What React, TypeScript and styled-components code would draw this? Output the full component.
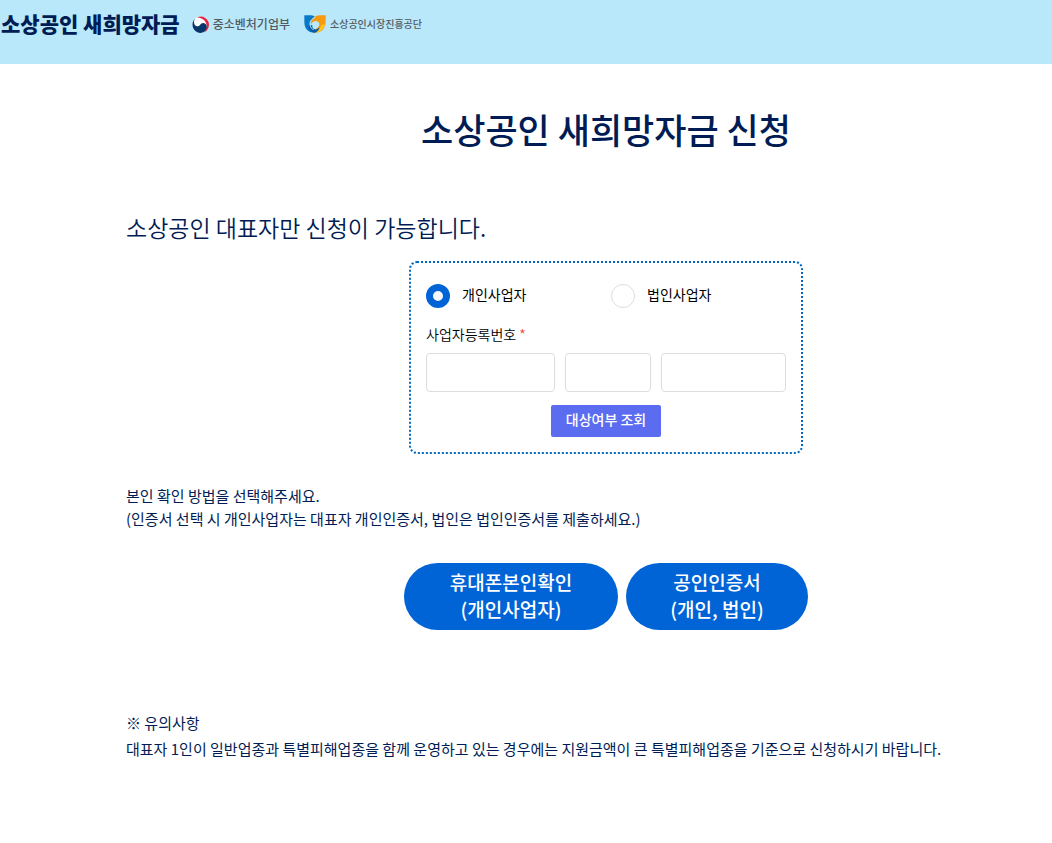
import React from 'react';
import styled, { createGlobalStyle } from 'styled-components';

const GlobalStyle = createGlobalStyle`
  *, *::before, *::after { box-sizing: border-box; }
  body {
    margin: 0;
    background: #fff;
    color: #001c54;
    font-family: "Noto Sans CJK KR", "Noto Sans", sans-serif;
    font-size: 15px;
    word-break: keep-all;
  }
  h1, h2, p, fieldset { margin: 0; padding: 0; border: 0; font-weight: 400; }
  button, input { font-family: inherit; }
`;

const Header = styled.header`
  display: flex;
  align-items: flex-start;
  height: 64px;
  padding: 11px 0 0 1px;
  background: #b8e8fa;
  line-height: 24px;
  white-space: nowrap;
`;

const SiteName = styled.a`
  color: #001c54;
  font-size: 21px;
  font-weight: 900;
  text-decoration: none;
`;

const Agencies = styled.div`
  display: flex;
  gap: 14px;
  margin-left: 12px;
`;

const Agency = styled.a<{ $size: number }>`
  display: flex;
  align-items: center;
  gap: 4px;
  height: 26px;
  color: #555a60;
  font-size: ${(p) => p.$size}px;
  font-weight: 500;
  text-decoration: none;

  svg { flex: none; }
`;

const Main = styled.main`
  padding: 40px 0 60px 126px;
`;

const Centered = styled.div`
  display: flex;
  justify-content: center;
  padding-left: 34px;
`;

const Title = styled.h1`
  font-size: 35px;
  font-weight: 500;
  line-height: 50px;
`;

const Lead = styled.h2`
  margin: 57px 0 17px;
  font-size: 23px;
  font-weight: 350;
  line-height: 33px;
`;

const FormBox = styled.form`
  display: flex;
  flex-direction: column;
  width: 394px;
  padding: 20px 15px 15px;
  border: 2px dotted #0068c0;
  border-radius: 8px;
  color: #000;
  font-size: 14px;
`;

const RadioRow = styled.fieldset`
  display: grid;
  grid-template-columns: 185px 1fr;
`;

const RadioLabel = styled.label`
  display: flex;
  align-items: center;
  gap: 12px;
  height: 26px;
  line-height: 22px;

  span { padding-bottom: 4px; }
`;

const Radio = styled.input`
  appearance: none;
  width: 24px;
  height: 24px;
  margin: 0;
  border: 1px solid #ddd;
  border-radius: 50%;
  background: #fff;

  &:checked {
    border: 7px solid #0064d6;
    background: #f4f8fd;
  }
`;

const NumberLabel = styled.label`
  margin: 15px 0 9px;
  font-weight: 350;
  line-height: 20px;
`;

const Required = styled.span`
  margin-left: 3px;
  color: #f0453a;
`;

const NumberRow = styled.div`
  display: grid;
  grid-template-columns: 129fr 86fr 125fr;
  gap: 10px;
`;

const NumberInput = styled.input`
  width: 100%;
  height: 39px;
  padding: 0 10px;
  border: 1px solid #ddd;
  border-radius: 4px;
  background: #fff;
  font-size: 14px;
`;

const CheckButton = styled.button`
  align-self: center;
  width: 110px;
  height: 32px;
  margin-top: 13px;
  padding: 0 0 4px;
  border: 0;
  border-radius: 2px;
  background: #5c6cf0;
  color: #fff;
  font-size: 14px;
  font-weight: 500;
  line-height: 28px;
`;

const Guide = styled.p`
  margin: 30px 0 33px;
  line-height: 23px;
`;

const Actions = styled(Centered)`
  gap: 8px;
`;

const ActionButton = styled.button<{ $width: number }>`
  width: ${(p) => p.$width}px;
  padding: 5px 0 8px;
  border: 0;
  border-radius: 34px;
  background: #0064d6;
  color: #fff;
  font-size: 19px;
  font-weight: 500;
  line-height: 27px;
`;

const Notice = styled.p`
  margin-top: 80px;
  line-height: 26px;
`;

const GovernmentMark = () => (
  <svg width="17" height="17" viewBox="0 0 34 34" aria-hidden="true">
    <circle cx="17" cy="17" r="16" fill="#fff" />
    <path d="M10 3C18-2 29 2 33 12c3 9-2 18-9 21 5-6 7-15 3-21C24 6 17 3 10 3Z" fill="#e6213c" />
    <path d="M8 4C0 9-1 20 4 27c5 7 15 9 21 4 5-4 6-12 2-15-4-4-9-1-11 2-3 4-9 3-11-1C3 12 4 7 8 4Z" fill="#06366b" />
  </svg>
);

const FoundationMark = () => (
  <svg width="22" height="18" viewBox="0 0 66 54" aria-hidden="true">
    <path d="M1 1h20c6 0 10 2 12 6-9 4-15 11-15 21 0 12 7 19 17 19v6C12 54 1 41 1 20Z" fill="#0879c6" />
    <path d="M65 1H48c-15 0-27 10-27 24v4c3-8 9-12 16-11 6 1 9 5 9 10 0 6-4 11-10 13l-2 12c20 0 31-15 31-36Z" fill="#f79a10" />
    <path d="M63 25c-4 18-15 28-32 28l3-8c9 0 16-6 19-15 4 0 8-2 10-5Z" fill="#ffc91a" />
    <path d="M14 31c-1 13 7 22 19 22 8-3 13-9 14-17-4 5-9 8-14 7-6-1-9-6-8-12Z" fill="#0a5aa6" />
    <path d="M27 29c0-5 4-8 8-7 4 0 6 3 5 7s-4 7-8 7-5-3-5-7Z" fill="#b8e8fa" />
    <path d="M34 7c-11 4-17 12-16 22 1 8 5 13 11 15" fill="none" stroke="#b8e8fa" strokeWidth="3" />
  </svg>
);

export default function App() {
  return (
    <>
      <GlobalStyle />
      <Header>
        <SiteName href="#">소상공인 새희망자금</SiteName>
        <Agencies>
          <Agency href="#" $size={12}>
            <GovernmentMark />
            중소벤처기업부
          </Agency>
          <Agency href="#" $size={10}>
            <FoundationMark />
            소상공인시장진흥공단
          </Agency>
        </Agencies>
      </Header>
      <Main>
        <Centered>
          <Title>소상공인 새희망자금 신청</Title>
        </Centered>
        <Lead>소상공인 대표자만 신청이 가능합니다.</Lead>
        <Centered>
          <FormBox onSubmit={(e) => e.preventDefault()}>
            <RadioRow aria-label="사업자 구분">
              <RadioLabel>
                <Radio type="radio" name="kind" value="personal" defaultChecked />
                <span>개인사업자</span>
              </RadioLabel>
              <RadioLabel>
                <Radio type="radio" name="kind" value="corporate" />
                <span>법인사업자</span>
              </RadioLabel>
            </RadioRow>
            <NumberLabel htmlFor="number-1">
              사업자등록번호<Required>*</Required>
            </NumberLabel>
            <NumberRow>
              <NumberInput id="number-1" type="text" inputMode="numeric" maxLength={3} />
              <NumberInput type="text" inputMode="numeric" maxLength={2} aria-label="사업자등록번호 가운데 자리" />
              <NumberInput type="text" inputMode="numeric" maxLength={5} aria-label="사업자등록번호 끝자리" />
            </NumberRow>
            <CheckButton type="submit">대상여부 조회</CheckButton>
          </FormBox>
        </Centered>
        <Guide>
          본인 확인 방법을 선택해주세요.
          <br />
          (인증서 선택 시 개인사업자는 대표자 개인인증서, 법인은 법인인증서를 제출하세요.)
        </Guide>
        <Actions>
          <ActionButton type="button" $width={214}>
            휴대폰본인확인
            <br />
            (개인사업자)
          </ActionButton>
          <ActionButton type="button" $width={182}>
            공인인증서
            <br />
            (개인, 법인)
          </ActionButton>
        </Actions>
        <Notice>
          ※ 유의사항
          <br />
          대표자 1인이 일반업종과 특별피해업종을 함께 운영하고 있는 경우에는 지원금액이 큰 특별피해업종을 기준으로 신청하시기 바랍니다.
        </Notice>
      </Main>
    </>
  );
}
